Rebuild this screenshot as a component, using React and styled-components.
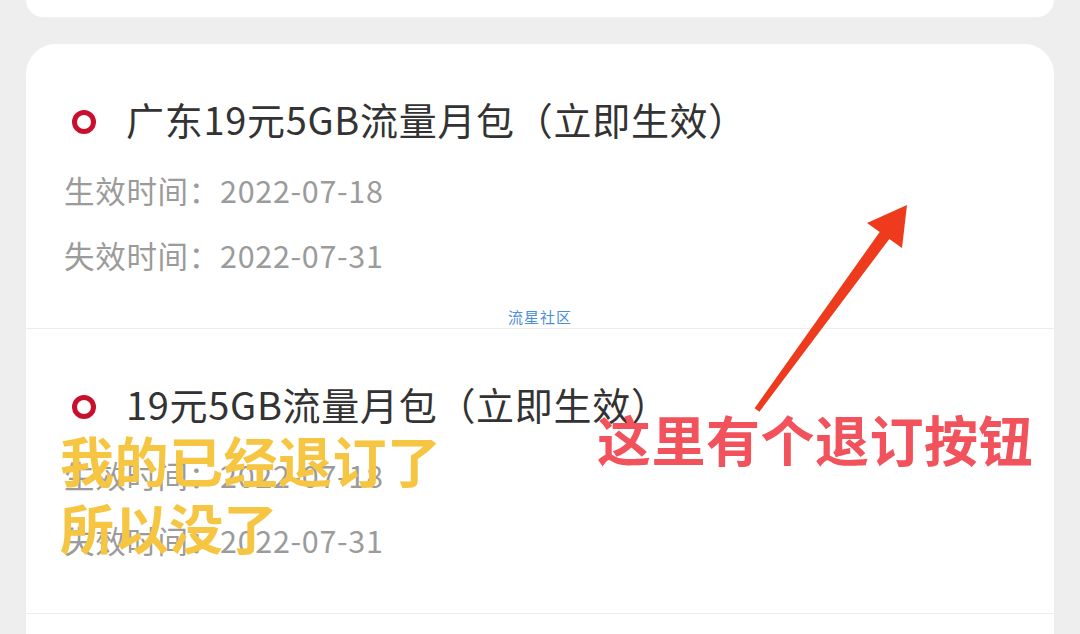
import React from "react";
import styled, { createGlobalStyle } from "styled-components";

const GlobalStyle = createGlobalStyle`
  html, body {
    margin: 0;
    padding: 0;
    background: #eeeeee;
  }
  body {
    font-family: "Noto Sans CJK SC", "Noto Sans", sans-serif;
    overflow: hidden;
  }
`;

const Page = styled.div`
  position: relative;
  height: 634px;
  overflow: hidden;
  padding: 0 26px;
  box-sizing: border-box;
  display: flex;
  flex-direction: column;
  gap: 27px;
`;

const TopCard = styled.div`
  height: 17px;
  background: #fff;
  border-radius: 0 0 30px 30px;
`;

const Card = styled.div`
  position: relative;
  background: #fff;
  border-radius: 30px 30px 0 0;
  flex: 1;
`;

const Item = styled.div`
  padding: 49px 38px 40px;
  height: 285px;
  box-sizing: border-box;
  border-bottom: 1px solid #ececec;
`;

const TitleRow = styled.div`
  display: flex;
  align-items: center;
  gap: 30px;
  height: 50px;
  padding-left: 8px;
`;

const Ring = styled.span`
  width: 24px;
  height: 24px;
  box-sizing: border-box;
  border: 5px solid #c8102e;
  border-radius: 50%;
  margin-top: 8px;
  flex-shrink: 0;
`;

const Title = styled.span`
  font-size: 38px;
  color: #333333;
  white-space: nowrap;
  letter-spacing: 0.7px;
`;

const Meta = styled.div`
  font-size: 30.5px;
  line-height: 65px;
  color: #9b9b9b;
  white-space: nowrap;
  letter-spacing: 0.7px;
  margin-top: ${(p) => (p.$first ? "15px" : "0")};
`;

const Watermark = styled.span`
  position: absolute;
  left: 482px;
  top: 262px;
  font-size: 15px;
  color: #4a8fd8;
  letter-spacing: 1px;
`;

const Note = styled.div`
  position: absolute;
  left: ${(p) => p.$x}px;
  top: ${(p) => p.$y}px;
  font-size: 54px;
  line-height: 67px;
  font-weight: 700;
  color: ${(p) => p.$color};
  white-space: nowrap;
  letter-spacing: 0.5px;
`;

const Arrow = styled.svg`
  position: absolute;
  left: 750px;
  top: 200px;
`;

const items = [
  { title: "广东19元5GB流量月包（立即生效）", start: "2022-07-18", end: "2022-07-31" },
  { title: "19元5GB流量月包（立即生效）", start: "2022-07-18", end: "2022-07-31" },
];

const App = () => (
  <>
    <GlobalStyle />
    <Page>
      <TopCard />
      <Card>
        {items.map((it) => (
          <Item key={it.title}>
            <TitleRow>
              <Ring />
              <Title>{it.title}</Title>
            </TitleRow>
            <Meta $first>生效时间：{it.start}</Meta>
            <Meta>失效时间：{it.end}</Meta>
          </Item>
        ))}
        <Watermark>流星社区</Watermark>
      </Card>
      <Arrow width="165" height="216" viewBox="0 0 165 216">
        <polygon
          points="4.6,208.2 129.7,32 117,23 157,5 152,48 139.3,39 9.4,211.8"
          fill="#ee3b1d"
        />
      </Arrow>
      <Note $x={60} $y={426} $color="#f6c542">
        我的已经退订了
        <br />
        所以没了
      </Note>
      <Note $x={597} $y={405} $color="#f2525b">
        这里有个退订按钮
      </Note>
    </Page>
  </>
);

export default App;
